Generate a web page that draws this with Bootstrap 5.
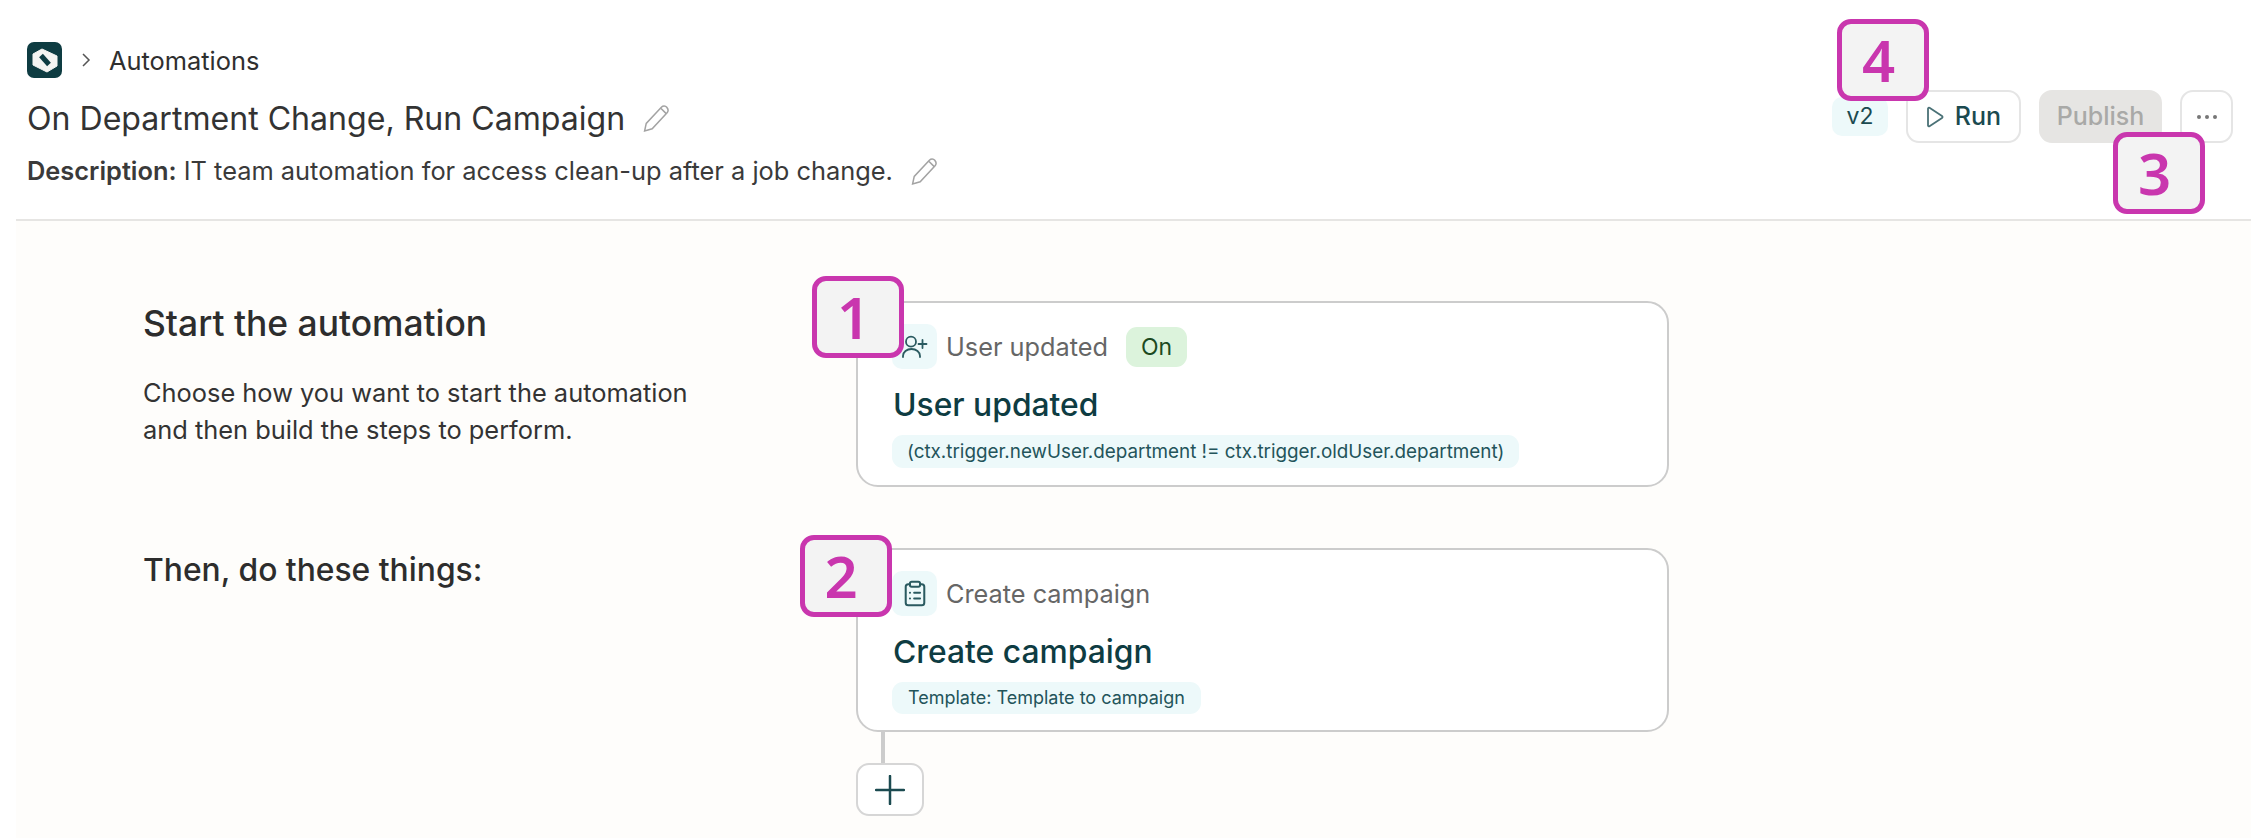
<!doctype html>
<html lang="en">
<head>
<meta charset="utf-8">
<title>Automations</title>
<link href="https://cdn.jsdelivr.net/npm/bootstrap@5.3.0/dist/css/bootstrap.min.css" rel="stylesheet">
<style>
html,body{height:838px;overflow:hidden;background:#fff}
body{font-family:Inter,"Liberation Sans",sans-serif;color:#333}
.frame{margin:0 13px 0 16px;position:relative}
.top{height:221px;border-bottom:2px solid #e6e5e3;padding:42px 18px 0 11px}
.crumb{height:36px;font-size:25.4px;line-height:36px;color:#2f2f2f}
.crumb span{position:relative;top:1px}
.logo{width:35px;height:36px;display:block}
.crumb .chev{width:10px;height:14px;margin:0 18px 0 19px}
.ttl{font-size:32.1px;line-height:40px;margin-top:21px;font-weight:400;color:#333;margin-bottom:0}
.desc{font-size:25.4px;line-height:32px;margin-top:16px;margin-bottom:0;color:#3a3a3a}
.desc b{font-weight:600}
.pen{width:27px;height:27px;display:block;margin-left:18px}
.ttl-pen{margin-top:27px}
.desc-pen{margin-top:19px}
.actions{padding-top:48px}
.vbadge{width:56px;height:39px;background:#edf9fa;color:#1b4a50;font-size:23px;font-weight:400;line-height:39px;border-radius:10px;padding:0;margin-right:18px}
.btn-x{height:53px;border-radius:13px;font-size:25px;line-height:1;font-weight:500;padding:0;display:flex;align-items:center;justify-content:center;--bs-btn-border-width:2px}
.btn-run{width:115px;background:#fff;border:2px solid #e5e5e5;color:#1b4a50;gap:11px;margin-right:18px}
.btn-pub,.btn-pub:disabled{width:123px;background:#e6e5e3;border:2px solid #e6e5e3;color:#a9a9a7;opacity:1;margin-right:18px}
.btn-more{width:53px;background:#fff;border:2px solid #e5e5e5}
.canvas{height:617px;background:#fefdfb;padding:80px 0 0 127px}
.left{width:713px;flex:none}
.left h2{font-size:35.4px;line-height:44px;font-weight:500;margin:0;color:#2d2d2d;position:relative;top:1px}
.left .then{font-size:31.8px;top:0}
.left p{font-size:25.4px;line-height:37px;margin:29px 0 0;color:#333}
.step{width:813px;border:2px solid #ccc;border-radius:22px;background:#fff;padding:21px 34px 17px;position:relative;box-shadow:none}
.sec2 .step{padding-bottom:16px}
.tile{width:45px;height:45px;background:#edf9fa;border-radius:10px;flex:none;display:flex;align-items:center;justify-content:center}
.kind{font-size:25.3px;color:#666;margin-left:9px;line-height:45px}
.on{height:40px;width:61px;border-radius:11px;background:#dcf3dc;color:#1c4a1f;font-size:23px;font-weight:400;line-height:40px;padding:0;margin-left:18px}
.step h3{font-size:31.8px;line-height:40px;font-weight:500;color:#0e3c42;margin:16px 0 0 1px}
.chip{height:33px;border-radius:11px;background:#edf9fa;color:#23545a;font-size:18.83px;line-height:33px;padding:0 15px;margin-top:10px;font-weight:400;display:inline-block}
.sec2{margin-top:61px}
.sec2 .chip{height:32px;line-height:32px;padding:0 16px;font-size:18px}
.wire{width:4px;height:31px;background:#ccc;margin-left:25px}
.plus{width:68px;height:53px;border:2px solid #d6d6d6;border-radius:13px;background:#fff;padding:0;display:flex;align-items:center;justify-content:center}
.tag{position:absolute;width:92px;height:82px;border:5px solid #c936ae;border-radius:14px;background:#f3f3f3;color:#c936ae;font-family:"Noto Sans",sans-serif;font-weight:600;font-size:58px;line-height:72px;text-align:center;padding-right:9px}
.tag-4{left:1821px;top:19px}
.tag-3{left:2097px;top:132px}
.tag-1{left:-46px;top:-27px}
.tag-2{left:-58px;top:-15px;padding-right:10px}
</style>
</head>
<body>
<div class="frame">
  <header class="top d-flex justify-content-between align-items-start">
    <div>
      <div class="crumb d-flex align-items-center">
        <svg class="logo" viewBox="0 0 35 36"><rect width="35" height="36" rx="7" fill="#0e3c42"/><path d="M15 7 L30 14 V24 L20 30 L6 23 V12 Z" fill="#f4f4f2" stroke="#f4f4f2" stroke-width="1" stroke-linejoin="round"/><path d="M14 13.500 L22 22.500" stroke="#0e3c42" stroke-width="5"/></svg>
        <svg class="chev" viewBox="0 0 10 14"><path d="M2 1l6 6-6 6" fill="none" stroke="#555" stroke-width="1.5"/></svg>
        <span>Automations</span>
      </div>
      <div class="d-flex align-items-start">
        <h1 class="ttl">On Department Change, Run Campaign</h1>
        <svg class="pen ttl-pen" viewBox="1 1 24 25"><path d="M2 25l1.500-7L17.500 3c1.500-1.500 3.800-1.500 5 0s1.800 3.300 .5 5L9 23z M17 4l5 5" fill="none" stroke="#a3a3a3" stroke-width="1.400"/></svg>
      </div>
      <div class="d-flex align-items-start">
        <p class="desc"><b>Description:</b> IT team automation for access clean-up after a job change.</p>
        <svg class="pen desc-pen" viewBox="1 1 24 25"><path d="M2 25l1.500-7L17.500 3c1.500-1.500 3.800-1.500 5 0s1.800 3.300 .5 5L9 23z M17 4l5 5" fill="none" stroke="#a3a3a3" stroke-width="1.400"/></svg>
      </div>
    </div>
    <div class="actions d-flex align-items-center">
      <span class="badge vbadge text-center">v2</span>
      <button class="btn btn-x btn-run" type="button"><svg width="18" height="22" viewBox="0 0 18 22"><path d="M2 2.500v17a1 1 0 0 0 1.500.8L16 12a1.200 1.200 0 0 0 0-2L3.500 1.700A1 1 0 0 0 2 2.500z" fill="none" stroke="#4a7176" stroke-width="1.800"/></svg>Run</button>
      <button class="btn btn-x btn-pub" type="button" disabled>Publish</button>
      <button class="btn btn-x btn-more" type="button" aria-label="More"><svg width="22" height="6" viewBox="0 0 22 6"><g fill="#777"><circle cx="3" cy="3" r="2"/><circle cx="11" cy="3" r="2"/><circle cx="19" cy="3" r="2"/></g></svg></button>
    </div>
  </header>
  <span class="tag tag-4">4</span>
  <span class="tag tag-3">3</span>
  <main class="canvas">
    <section class="d-flex align-items-start">
      <div class="left">
        <h2>Start the automation</h2>
        <p>Choose how you want to start the automation<br>and then build the steps to perform.</p>
      </div>
      <div class="card step">
        <span class="tag tag-1">1</span>
        <div class="d-flex align-items-center">
          <span class="tile"><svg width="28" height="24" viewBox="0 0 28 24" fill="none" stroke="#2a5a60" stroke-width="1.800" stroke-linecap="round"><circle cx="10" cy="6.700" r="5"/><path d="M2 22v-1a8.500 7 0 0 1 17 0v1M21.500 5v8M17.500 9h8"/></svg></span>
          <span class="kind">User updated</span>
          <span class="badge on text-center">On</span>
        </div>
        <h3>User updated</h3>
        <div><span class="chip">(ctx.trigger.newUser.department != ctx.trigger.oldUser.department)</span></div>
      </div>
    </section>
    <section class="d-flex align-items-start sec2">
      <div class="left"><h2 class="then">Then, do these things:</h2></div>
      <div>
        <div class="card step">
          <span class="tag tag-2">2</span>
          <div class="d-flex align-items-center">
            <span class="tile"><svg width="22" height="27" viewBox="0 0 26 32" fill="none" stroke="#2a5a60" stroke-width="2.400" stroke-linecap="round" stroke-linejoin="round"><path d="M7 5H5a3 3 0 0 0-3 3v19a3 3 0 0 0 3 3h16a3 3 0 0 0 3-3V8a3 3 0 0 0-3-3h-2"/><rect x="7" y="2" width="12" height="6" rx="2"/><path d="M7 15h.1M12 15h7M7 22h.1M12 22h7"/></svg></span>
            <span class="kind">Create campaign</span>
          </div>
          <h3>Create campaign</h3>
          <div><span class="chip">Template: Template to campaign</span></div>
        </div>
        <div class="wire"></div>
        <button class="btn plus" type="button" aria-label="Add step"><svg width="30" height="30" viewBox="0 0 30 30"><path d="M15 1v28M1 15h28" stroke="#1b4a50" stroke-width="2.500" stroke-linecap="round"/></svg></button>
      </div>
    </section>
  </main>
</div>
<script src="https://cdn.jsdelivr.net/npm/bootstrap@5.3.0/dist/js/bootstrap.bundle.min.js"></script>
</body>
</html>
